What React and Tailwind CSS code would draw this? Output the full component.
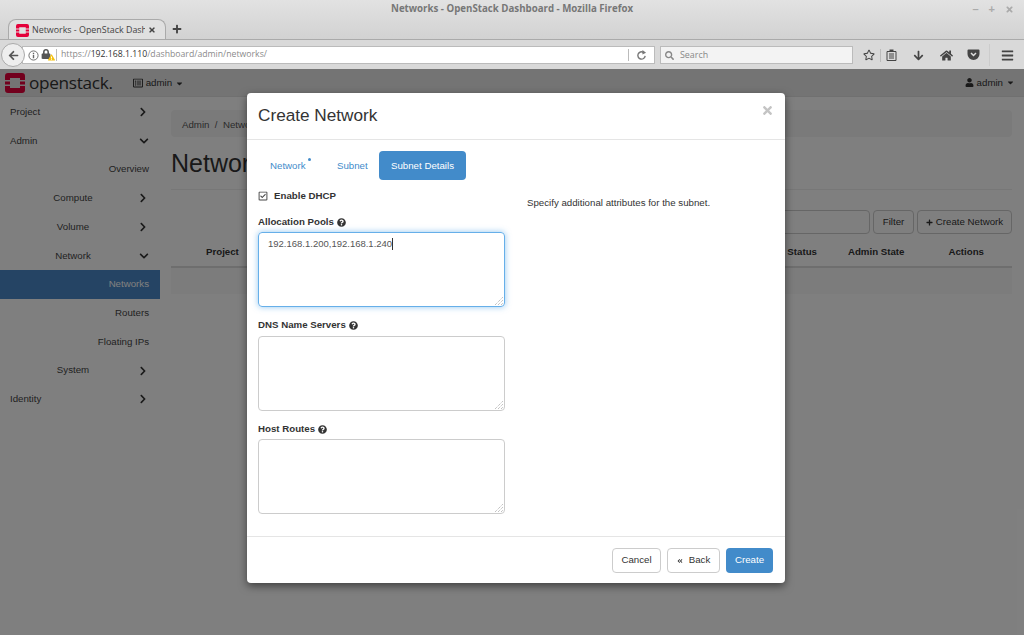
import { FaChevronRight, FaChevronDown, FaUser, FaPlus, FaQuestionCircle, FaRegCheckSquare, FaAngleDoubleLeft, FaRegStar, FaArrowDown, FaHome, FaBars, FaArrowLeft, FaCaretDown, FaSearch, FaLock, FaExclamationTriangle, FaTimes, FaRegListAlt } from 'react-icons/fa'

const SIDE = [
  { label: 'Project', level: 0, arrow: 'right' },
  { label: 'Admin', level: 0, arrow: 'down' },
  { label: 'Overview', level: 2 },
  { label: 'Compute', level: 1, arrow: 'right' },
  { label: 'Volume', level: 1, arrow: 'right' },
  { label: 'Network', level: 1, arrow: 'down' },
  { label: 'Networks', level: 2, active: true },
  { label: 'Routers', level: 2 },
  { label: 'Floating IPs', level: 2 },
  { label: 'System', level: 1, arrow: 'right' },
  { label: 'Identity', level: 0, arrow: 'right' },
]

function StackLogo({ size = 16 }) {
  return (
    <svg width={size} height={size} viewBox="0 0 20 20">
      <path fill="#e4003a" d="M3 0h14a3 3 0 0 1 3 3v4h-5V5H5v2H0V3a3 3 0 0 1 3-3zM0 13h5v2h10v-2h5v4a3 3 0 0 1-3 3H3a3 3 0 0 1-3-3zM0 8.500h5v3H0zM15 8.500h5v3h-5z" />
    </svg>
  )
}

function SideRow({ item }) {
  return (
    <div className={`h-[28.700px] flex items-center text-[9.700px] ${item.active ? 'bg-[#4a88c8] text-white' : 'text-[#444]'}`}>
      {item.level === 0 && <span className="pl-[10px]">{item.label}</span>}
      {item.level === 1 && <span className="ml-[15px] w-[116px] text-center">{item.label}</span>}
      {item.level === 2 && <span className="w-[149px] text-right">{item.label}</span>}
      {item.arrow === 'right' && <FaChevronRight className="text-[10px] text-[#333] ml-auto mr-[12px]" />}
      {item.arrow === 'down' && <FaChevronDown className="text-[10px] text-[#333] ml-auto mr-[11px]" />}
    </div>
  )
}

function Field({ label, focused, value }) {
  return (
    <div className="mb-[10.500px]">
      <div className="flex items-center gap-[3px] text-[9.700px] font-bold text-[#333] h-[16px] mb-[2px]">
        {label}
        <FaQuestionCircle className="text-[9px]" />
      </div>
      <div className={`relative w-[247px] h-[75px] rounded-[4px] border px-[9px] py-[4px] text-[9.500px] text-[#555] ${focused ? 'border-[#66afe9] shadow-[0_0_6px_rgba(102,175,233,0.7)]' : 'border-[#ccc]'}`}>
        {value && (
          <span className="inline-flex items-center">
            {value}
            <span className="w-px h-[12px] bg-[#333]" />
          </span>
        )}
        <svg className="absolute right-[1px] bottom-[1px]" width="8" height="8" viewBox="0 0 8 8">
          <path stroke="#aaa" strokeWidth="1" strokeDasharray="1 1" d="M0 8L8 0M3 8l5-5M6 8l2-2" />
        </svg>
      </div>
    </div>
  )
}

export default function App() {
  return (
    <div className="relative w-[1024px] h-[635px] overflow-hidden bg-white font-['Liberation_Sans',sans-serif]">
      {/* firefox chrome */}
      <div className="h-[39px] bg-gradient-to-b from-[#e2e2e2] to-[#d2d2d2] relative">
        <div className="h-[19px] flex items-center justify-center text-[9.700px] font-bold text-[#777] font-['Open_Sans',sans-serif]">
          Networks - OpenStack Dashboard - Mozilla Firefox
        </div>
        <div className="absolute right-[10px] top-[3px] flex items-center gap-[10px] text-[11px] text-[#aaa] font-bold leading-[12px]">
          <span>–</span>
          <span>+</span>
          <FaTimes className="text-[9px]" />
        </div>
        <div className="flex items-end h-[20px] pl-[8px]">
          <div className="w-[158px] h-[21px] bg-[#e0e0e0] border border-b-0 border-[#aaa] rounded-t-[8px] flex items-center pl-[7px] pr-[9px] gap-[3px] -mb-px">
            <StackLogo size={13} />
            <span className="text-[8.900px] text-[#444] whitespace-nowrap overflow-hidden flex-1 font-['Open_Sans',sans-serif]">Networks - OpenStack Dash</span>
            <FaTimes className="text-[8px] text-[#444] shrink-0" />
          </div>
          <FaPlus className="text-[10px] text-[#444] ml-[6px] mb-[5px]" />
        </div>
      </div>
      <div className="h-[30px] bg-[#d9d9d9] border-t border-[#aaa] flex items-center relative pt-px">
        <div className="w-[24px] h-[24px] ml-[1px] rounded-full bg-[#eee] border border-[#aaa] flex items-center justify-center z-10">
          <FaArrowLeft className="text-[11px] text-[#555]" />
        </div>
        <div className="w-[633px] h-[18px] -ml-[3px] bg-white border border-[#bbb] flex items-center pl-[5px] text-[10px]">
          <svg width="11" height="11" viewBox="0 0 12 12" className="shrink-0">
            <circle cx="6" cy="6" r="5" fill="none" stroke="#666" />
            <path stroke="#666" strokeWidth="1.500" d="M6 5.500v3.500M6 3v1.500" />
          </svg>
          <span className="relative ml-[2px] w-[14px] h-[12px] shrink-0">
            <FaLock className="text-[10px] text-[#555]" />
            <FaExclamationTriangle className="absolute right-0 bottom-0 text-[7px] text-[#f5c211]" />
          </span>
          <span className="w-px h-[12px] bg-[#bbb] ml-[1px] mr-[4px]" />
          <span className="text-[8.700px] whitespace-nowrap font-['Open_Sans',sans-serif] text-[#8a8a8a]">
            https://<span className="text-[#333]">192.168.1.110</span>/dashboard/admin/networks/
          </span>
          <span className="ml-auto w-px h-[12px] bg-[#bbb]" />
          <svg width="11" height="11" viewBox="0 0 12 12" className="mx-[7px] shrink-0">
            <path fill="none" stroke="#777" strokeWidth="1.500" d="M10 6.500A4 4 0 1 1 8 2.500" />
            <path fill="#777" d="M7 0l4 3-4 2z" />
          </svg>
        </div>
        <div className="w-[193px] h-[18px] ml-[5px] bg-[#f3f3f3] border border-[#bbb] flex items-center pl-[4px] gap-[6px] text-[8.900px] text-[#888] font-['Open_Sans',sans-serif]">
          <FaSearch className="text-[9px] text-[#888]" />
          Search
        </div>
        <div className="flex items-center ml-[10px] text-[#444]">
          <FaRegStar className="text-[12px]" />
          <span className="w-px h-[13px] bg-[#bbb] ml-[5px] mr-[5px]" />
          <svg width="11" height="12" viewBox="0 0 11 12">
            <path fill="none" stroke="#444" d="M1 2.500h9v9H1zM3 5h5M3 7h5M3 9h5" />
            <path fill="#444" d="M3.500 0.500h4v2h-4z" />
          </svg>
          <FaArrowDown className="text-[11px] ml-[16px]" />
          <FaHome className="text-[13px] ml-[16px]" />
          <svg width="13" height="12" viewBox="0 0 13 12" className="ml-[14px]">
            <path fill="#444" d="M1.500 0.500h10a1 1 0 0 1 1 1V5a6 6 0 0 1-12 0V1.500a1 1 0 0 1 1-1z" />
            <path fill="none" stroke="#ddd" strokeWidth="1.500" d="M4 4l2.500 2.500L9 4" />
          </svg>
          <span className="w-px h-[22px] bg-[#ccc] ml-[9px]" />
          <FaBars className="text-[13px] ml-[11px]" />
        </div>
      </div>

      {/* dashboard behind the dialog */}
      <div className="h-[566px] relative">
        <div className="h-[28px] border-b border-[#e0e0e0] flex items-center pl-[5px] pt-[1px] bg-[#e8e8e8]">
          <StackLogo size={20} />
          <span className="ml-[4px] text-[17.200px] leading-none text-[#333] font-['Open_Sans',sans-serif] tracking-[-0.3px]">openstack.</span>
          <FaRegListAlt className="ml-[20px] text-[10px] text-[#333]" />
          <span className="ml-[3px] text-[9.700px] text-[#333]">admin</span>
          <FaCaretDown className="ml-[3px] text-[9px] text-[#333]" />
          <div className="ml-auto mr-[9px] flex items-center gap-[3px] text-[9.700px] text-[#333]">
            <FaUser className="text-[9px]" />
            admin
            <FaCaretDown className="text-[9px]" />
          </div>
        </div>
        <div className="flex bg-white">
          <div className="w-[160px] pt-[1px] shrink-0">
            {SIDE.map(item => <SideRow key={item.label} item={item} />)}
          </div>
          <div className="flex-1 pl-[11px] pr-[12px] pt-[13px]">
            <div className="h-[27px] bg-[#f5f5f5] rounded-[4px] flex items-center pl-[11px] pt-[3px] text-[9.700px] text-[#555]">
              Admin&nbsp;&nbsp;/&nbsp;&nbsp;Networks
            </div>
            <div className="text-[25px] text-[#333] h-[52px] leading-[50px] mt-[1px] border-b border-[#eee]">Networks</div>
            <div className="flex justify-end gap-[3px] mt-[20px] h-[24px]">
              <div className="w-[300px] border border-[#ccc] rounded-[4px]" />
              <div className="w-[41px] border border-[#ccc] rounded-[4px] flex items-center justify-center text-[9.700px] text-[#333]">Filter</div>
              <div className="w-[95px] border border-[#ccc] rounded-[4px] flex items-center justify-center gap-[3px] text-[9.700px] text-[#333]">
                <FaPlus className="text-[7px]" />
                Create Network
              </div>
            </div>
            <div className="flex items-center h-[30px] mt-[4px] border-b-2 border-[#ddd] text-[9.700px] font-bold text-[#333]">
              <span className="ml-[35px]">Project</span>
              <span className="ml-auto">Status</span>
              <span className="ml-[31px]">Admin State</span>
              <span className="ml-[44px] mr-[28px]">Actions</span>
            </div>
            <div className="h-[26px] bg-[#f9f9f9]" />
          </div>
        </div>
      </div>

      {/* backdrop */}
      <div className="absolute left-0 right-0 top-[69px] bottom-0 bg-black/50" />

      {/* dialog */}
      <div className="absolute left-[247px] top-[93px] w-[538px] h-[490px] bg-white rounded-[4px] shadow-[0_3px_9px_rgba(0,0,0,0.5)] flex flex-col">
        <div className="h-[47px] border-b border-[#e5e5e5] flex items-center px-[11px] relative">
          <span className="text-[17.200px] text-[#333]">Create Network</span>
          <FaTimes className="absolute right-[11px] top-[11px] text-[13px] text-[#c4c4c4]" />
        </div>
        <div className="flex-1 px-[11px] pt-[11px]">
          <div className="flex items-start h-[29px] text-[9.700px] text-[#428bca]">
            <div className="h-[29px] pl-[12px] w-[79px] pt-px flex items-center relative">
              <span>Network</span>
              <span className="absolute left-[50px] top-[7px] w-[3px] h-[3px] rounded-full bg-[#428bca]" />
            </div>
            <div className="h-[29px] w-[42px] pt-px flex items-center">Subnet</div>
            <div className="h-[29px] w-[87px] pt-px flex items-center justify-center bg-[#428bca] text-white rounded-[4px]">Subnet Details</div>
          </div>
          <div className="flex mt-[8px]">
            <div className="w-[269px] shrink-0">
              <div className="flex items-center gap-[6px] text-[9.700px] font-bold text-[#333] h-[16px] mb-[10px]">
                <FaRegCheckSquare className="text-[10px] text-[#444]" />
                Enable DHCP
              </div>
              <Field label="Allocation Pools" focused value="192.168.1.200,192.168.1.240" />
              <Field label="DNS Name Servers" />
              <Field label="Host Routes" />
            </div>
            <p className="text-[9.700px] text-[#333] mt-[8px]">Specify additional attributes for the subnet.</p>
          </div>
        </div>
        <div className="h-[47px] border-t border-[#e5e5e5] flex items-center justify-end gap-[6px] pr-[12px] pt-px">
          <button className="w-[49px] h-[25px] rounded-[4px] border border-[#ccc] text-[9.700px] text-[#333]">Cancel</button>
          <button className="w-[53px] h-[25px] rounded-[4px] border border-[#ccc] text-[9.700px] text-[#333] flex items-center justify-center gap-[6px]">
            <FaAngleDoubleLeft className="text-[6px]" />
            Back
          </button>
          <button className="w-[47px] h-[25px] rounded-[4px] bg-[#428bca] text-[9.700px] text-white">Create</button>
        </div>
      </div>
    </div>
  )
}
